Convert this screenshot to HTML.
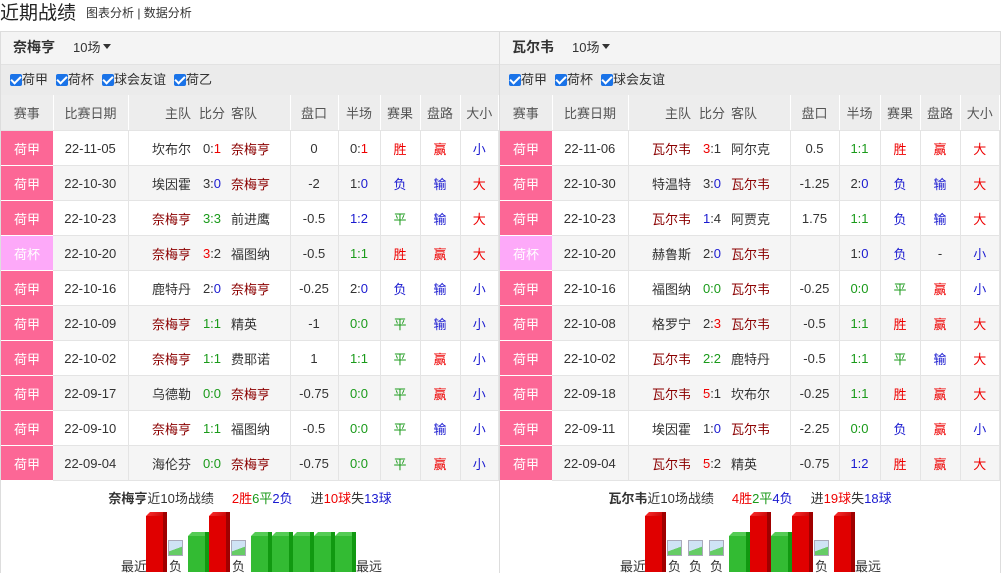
<!DOCTYPE html>
<html><head><meta charset="utf-8">
<style>
*{margin:0;padding:0;box-sizing:border-box}
body{width:1003px;height:573px;overflow:hidden;background:#fff;font-family:"Liberation Sans","Noto Sans CJK SC",sans-serif;font-size:13px;color:#333;position:relative}
.title{position:absolute;left:0;top:0;height:30px;line-height:26px;font-size:19px;color:#222}
.title span{font-size:12px;margin-left:10px;vertical-align:2px;color:#333}
.panel{position:absolute;top:31px;height:542px;border:1px solid #ddd;border-bottom:none}
.ph{height:33px;background:#f4f4f4;border-bottom:1px solid #e2e2e2;line-height:31px;padding-left:12px}
.ph b{font-size:14px;color:#333;margin-right:18px}
.ph .sel:after{content:"";display:inline-block;border:4px solid transparent;border-top:5px solid #333;margin-left:3px;vertical-align:-1px}
.fl{height:30px;background:#ebebeb;line-height:30px;padding-left:9px;font-size:13px}
.cb{display:inline-block;width:12px;height:12px;background:#1a73e8;border-radius:2px;vertical-align:-2px;position:relative}
.cb:after{content:"";position:absolute;left:3px;top:0px;width:4px;height:8px;border:solid #fff;border-width:0 2px 2px 0;transform:rotate(45deg)}
.fl .it{margin-right:8px}
table{border-collapse:collapse;table-layout:fixed;width:100%}
td,th{height:35px;text-align:center;font-weight:normal;white-space:nowrap;border-right:1px solid #e4e4e4;border-bottom:1px solid #e4e4e4;padding:0;padding-top:1px}
th{background:#ededed;color:#555;border-right:1px solid #fff}
tr.o td{background:#fff}tr.e td{background:#f5f5f5}
td.lg{background:#fc6796!important;color:#fff;border-right:none;border-bottom:1px solid #fff}
td.cup{background:#fda9f9!important;color:#fff}
td.h{text-align:right;padding-right:6px;border-right:none}
td.s{border-right:none}
td.a{text-align:left;padding-left:4px}
.t{color:#8b0000}.r{color:#e00}.b{color:#1a1ad0}.g{color:#1a9a1a}
.sum{position:absolute;left:0;right:0;top:452px;text-align:center;font-size:13px;line-height:30px}
.chart{position:absolute;top:478px;height:64px}
.bar{position:absolute;bottom:2px;width:21px}
.bar i{position:absolute;left:0;bottom:0;width:17px}
.bar em{position:absolute;left:17px;bottom:0;width:4px}
.bar s{position:absolute;left:0;width:21px;height:4px}
.rd i{background:#e00000;height:56px}.rd em{background:#a00000;height:60px}
.rd s{bottom:56px;background:linear-gradient(135deg,#ff3030,#c00000);clip-path:polygon(4px 0,21px 0,17px 4px,0 4px)}
.gr i{background:#33bb33;height:36px}.gr em{background:#119911;height:40px}
.gr s{bottom:36px;background:#55cc55;clip-path:polygon(4px 0,21px 0,17px 4px,0 4px)}
.ng{position:absolute;bottom:0;width:21px;height:34px;font-size:13px}
.ng .ic{position:absolute;left:1px;top:0;width:15px;height:16px;border:1px solid #aab;background:linear-gradient(160deg,#cfe3f5 55%,#6c6 56%);}
.ng span{position:absolute;left:2px;bottom:0;line-height:14px}
.lbl{position:absolute;bottom:0;font-size:13px;line-height:14px}
</style></head><body>
<div class="title">近期战绩<span>图表分析 | 数据分析</span></div>

<div class="panel" style="left:0;width:500px">
<div class="ph"><b>奈梅亨</b><span class="sel">10场</span></div>
<div class="fl"><span class="it"><i class="cb"></i>荷甲</span><span class="it"><i class="cb"></i>荷杯</span><span class="it"><i class="cb"></i>球会友谊</span><span class="it"><i class="cb"></i>荷乙</span></div>
<table>
<colgroup><col style="width:52px"><col style="width:75px"><col style="width:69px"><col style="width:30px"><col style="width:63px"><col style="width:48px"><col style="width:42px"><col style="width:40px"><col style="width:40px"><col></colgroup>
<tr><th>赛事</th><th>比赛日期</th><th style="text-align:right;padding-right:6px;border-right:none">主队</th><th style="border-right:none">比分</th><th style="text-align:left;padding-left:4px">客队</th><th>盘口</th><th>半场</th><th>赛果</th><th>盘路</th><th>大小</th></tr>
<tr class="o"><td class="lg">荷甲</td><td>22-11-05</td><td class="h">坎布尔</td><td class="s">0:<span class="r">1</span></td><td class="a t">奈梅亨</td><td>0</td><td>0:<span class="r">1</span></td><td class="r">胜</td><td class="r">赢</td><td class="b">小</td></tr>
<tr class="e"><td class="lg">荷甲</td><td>22-10-30</td><td class="h">埃因霍</td><td class="s">3:<span class="b">0</span></td><td class="a t">奈梅亨</td><td>-2</td><td>1:<span class="b">0</span></td><td class="b">负</td><td class="b">输</td><td class="r">大</td></tr>
<tr class="o"><td class="lg">荷甲</td><td>22-10-23</td><td class="h t">奈梅亨</td><td class="s g">3:3</td><td class="a">前进鹰</td><td>-0.5</td><td class="b">1:2</td><td class="g">平</td><td class="b">输</td><td class="r">大</td></tr>
<tr class="e"><td class="lg cup">荷杯</td><td>22-10-20</td><td class="h t">奈梅亨</td><td class="s"><span class="r">3</span>:2</td><td class="a">福图纳</td><td>-0.5</td><td class="g">1:1</td><td class="r">胜</td><td class="r">赢</td><td class="r">大</td></tr>
<tr class="o"><td class="lg">荷甲</td><td>22-10-16</td><td class="h">鹿特丹</td><td class="s">2:<span class="b">0</span></td><td class="a t">奈梅亨</td><td>-0.25</td><td>2:<span class="b">0</span></td><td class="b">负</td><td class="b">输</td><td class="b">小</td></tr>
<tr class="e"><td class="lg">荷甲</td><td>22-10-09</td><td class="h t">奈梅亨</td><td class="s g">1:1</td><td class="a">精英</td><td>-1</td><td class="g">0:0</td><td class="g">平</td><td class="b">输</td><td class="b">小</td></tr>
<tr class="o"><td class="lg">荷甲</td><td>22-10-02</td><td class="h t">奈梅亨</td><td class="s g">1:1</td><td class="a">费耶诺</td><td>1</td><td class="g">1:1</td><td class="g">平</td><td class="r">赢</td><td class="b">小</td></tr>
<tr class="e"><td class="lg">荷甲</td><td>22-09-17</td><td class="h">乌德勒</td><td class="s g">0:0</td><td class="a t">奈梅亨</td><td>-0.75</td><td class="g">0:0</td><td class="g">平</td><td class="r">赢</td><td class="b">小</td></tr>
<tr class="o"><td class="lg">荷甲</td><td>22-09-10</td><td class="h t">奈梅亨</td><td class="s g">1:1</td><td class="a">福图纳</td><td>-0.5</td><td class="g">0:0</td><td class="g">平</td><td class="b">输</td><td class="b">小</td></tr>
<tr class="e"><td class="lg">荷甲</td><td>22-09-04</td><td class="h">海伦芬</td><td class="s g">0:0</td><td class="a t">奈梅亨</td><td>-0.75</td><td class="g">0:0</td><td class="g">平</td><td class="r">赢</td><td class="b">小</td></tr>
</table>
<div class="sum"><b>奈梅亨</b>近10场战绩 &nbsp; &nbsp; <span class="r">2胜</span><span class="g">6平</span><span class="b">2负</span> &nbsp; &nbsp; 进<span class="r">10球</span>失<span class="b">13球</span></div>
<div class="chart" style="left:0;width:500px">
<span class="lbl" style="left:120px">最近</span>
<div class="bar rd" style="left:145px"><s></s><i></i><em></em></div>
<div class="ng" style="left:166px"><div class="ic"></div><span>负</span></div>
<div class="bar gr" style="left:187px"><s></s><i></i><em></em></div>
<div class="bar rd" style="left:208px"><s></s><i></i><em></em></div>
<div class="ng" style="left:229px"><div class="ic"></div><span>负</span></div>
<div class="bar gr" style="left:250px"><s></s><i></i><em></em></div>
<div class="bar gr" style="left:271px"><s></s><i></i><em></em></div>
<div class="bar gr" style="left:292px"><s></s><i></i><em></em></div>
<div class="bar gr" style="left:313px"><s></s><i></i><em></em></div>
<div class="bar gr" style="left:334px"><s></s><i></i><em></em></div>
<span class="lbl" style="left:355px">最远</span>
</div>
</div>

<div class="panel" style="left:499px;width:502px">
<div class="ph"><b>瓦尔韦</b><span class="sel">10场</span></div>
<div class="fl"><span class="it"><i class="cb"></i>荷甲</span><span class="it"><i class="cb"></i>荷杯</span><span class="it"><i class="cb"></i>球会友谊</span></div>
<table>
<colgroup><col style="width:52px"><col style="width:76px"><col style="width:69px"><col style="width:30px"><col style="width:63px"><col style="width:49px"><col style="width:41px"><col style="width:40px"><col style="width:40px"><col></colgroup>
<tr><th>赛事</th><th>比赛日期</th><th style="text-align:right;padding-right:6px;border-right:none">主队</th><th style="border-right:none">比分</th><th style="text-align:left;padding-left:4px">客队</th><th>盘口</th><th>半场</th><th>赛果</th><th>盘路</th><th>大小</th></tr>
<tr class="o"><td class="lg">荷甲</td><td>22-11-06</td><td class="h t">瓦尔韦</td><td class="s"><span class="r">3</span>:1</td><td class="a">阿尔克</td><td>0.5</td><td class="g">1:1</td><td class="r">胜</td><td class="r">赢</td><td class="r">大</td></tr>
<tr class="e"><td class="lg">荷甲</td><td>22-10-30</td><td class="h">特温特</td><td class="s">3:<span class="b">0</span></td><td class="a t">瓦尔韦</td><td>-1.25</td><td>2:<span class="b">0</span></td><td class="b">负</td><td class="b">输</td><td class="r">大</td></tr>
<tr class="o"><td class="lg">荷甲</td><td>22-10-23</td><td class="h t">瓦尔韦</td><td class="s"><span class="b">1</span>:4</td><td class="a">阿贾克</td><td>1.75</td><td class="g">1:1</td><td class="b">负</td><td class="b">输</td><td class="r">大</td></tr>
<tr class="e"><td class="lg cup">荷杯</td><td>22-10-20</td><td class="h">赫鲁斯</td><td class="s">2:<span class="b">0</span></td><td class="a t">瓦尔韦</td><td></td><td>1:<span class="b">0</span></td><td class="b">负</td><td>-</td><td class="b">小</td></tr>
<tr class="o"><td class="lg">荷甲</td><td>22-10-16</td><td class="h">福图纳</td><td class="s g">0:0</td><td class="a t">瓦尔韦</td><td>-0.25</td><td class="g">0:0</td><td class="g">平</td><td class="r">赢</td><td class="b">小</td></tr>
<tr class="e"><td class="lg">荷甲</td><td>22-10-08</td><td class="h">格罗宁</td><td class="s">2:<span class="r">3</span></td><td class="a t">瓦尔韦</td><td>-0.5</td><td class="g">1:1</td><td class="r">胜</td><td class="r">赢</td><td class="r">大</td></tr>
<tr class="o"><td class="lg">荷甲</td><td>22-10-02</td><td class="h t">瓦尔韦</td><td class="s g">2:2</td><td class="a">鹿特丹</td><td>-0.5</td><td class="g">1:1</td><td class="g">平</td><td class="b">输</td><td class="r">大</td></tr>
<tr class="e"><td class="lg">荷甲</td><td>22-09-18</td><td class="h t">瓦尔韦</td><td class="s"><span class="r">5</span>:1</td><td class="a">坎布尔</td><td>-0.25</td><td class="g">1:1</td><td class="r">胜</td><td class="r">赢</td><td class="r">大</td></tr>
<tr class="o"><td class="lg">荷甲</td><td>22-09-11</td><td class="h">埃因霍</td><td class="s">1:<span class="b">0</span></td><td class="a t">瓦尔韦</td><td>-2.25</td><td class="g">0:0</td><td class="b">负</td><td class="r">赢</td><td class="b">小</td></tr>
<tr class="e"><td class="lg">荷甲</td><td>22-09-04</td><td class="h t">瓦尔韦</td><td class="s"><span class="r">5</span>:2</td><td class="a">精英</td><td>-0.75</td><td class="b">1:2</td><td class="r">胜</td><td class="r">赢</td><td class="r">大</td></tr>
</table>
<div class="sum"><b>瓦尔韦</b>近10场战绩 &nbsp; &nbsp; <span class="r">4胜</span><span class="g">2平</span><span class="b">4负</span> &nbsp; &nbsp; 进<span class="r">19球</span>失<span class="b">18球</span></div>
<div class="chart" style="left:0;width:502px">
<span class="lbl" style="left:120px">最近</span>
<div class="bar rd" style="left:145px"><s></s><i></i><em></em></div>
<div class="ng" style="left:166px"><div class="ic"></div><span>负</span></div>
<div class="ng" style="left:187px"><div class="ic"></div><span>负</span></div>
<div class="ng" style="left:208px"><div class="ic"></div><span>负</span></div>
<div class="bar gr" style="left:229px"><s></s><i></i><em></em></div>
<div class="bar rd" style="left:250px"><s></s><i></i><em></em></div>
<div class="bar gr" style="left:271px"><s></s><i></i><em></em></div>
<div class="bar rd" style="left:292px"><s></s><i></i><em></em></div>
<div class="ng" style="left:313px"><div class="ic"></div><span>负</span></div>
<div class="bar rd" style="left:334px"><s></s><i></i><em></em></div>
<span class="lbl" style="left:355px">最远</span>
</div>
</div>
</body></html>
